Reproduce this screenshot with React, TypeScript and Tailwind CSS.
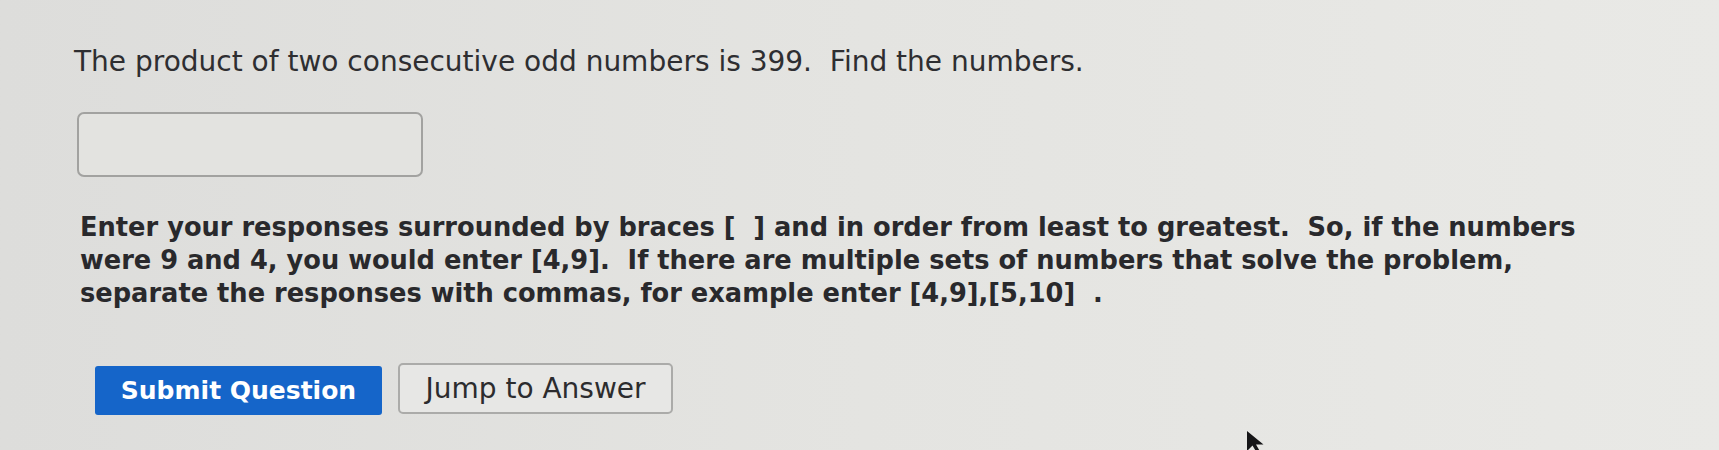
export default function App() {
  return (
    <div className="relative w-[1719px] h-[450px] overflow-hidden bg-gradient-to-r from-[#dddddb] via-[#e4e4e1] to-[#e9e9e6] text-[#2e2e31] font-['DejaVu_Sans',sans-serif]">
      <div className="pl-[74px] pt-[46px]">
        <p className="text-[28px] leading-[32px] whitespace-nowrap">
          The product of two consecutive odd numbers is 399.&nbsp; Find the numbers.
        </p>

        <div className="mt-[34px] ml-[3px] w-[346px] h-[65px] rounded-[7px] border-2 border-[#a2a2a0] bg-[#e3e3e0]" />

        <div className="mt-[34px] ml-[6px] text-[25.7px] leading-[33px] font-bold text-[#29292c] whitespace-nowrap">
          <p>Enter your responses surrounded by braces [&nbsp; ] and in order from least to greatest.&nbsp; So, if the numbers</p>
          <p>were 9 and 4, you would enter [4,9].&nbsp; If there are multiple sets of numbers that solve the problem,</p>
          <p>separate the responses with commas, for example enter [4,9],[5,10]&nbsp; .</p>
        </div>

        <div className="mt-[53px] ml-[21px] flex items-start gap-[16px]">
          <button className="mt-[3px] w-[287px] h-[49px] rounded-[3px] bg-[#1565c9] text-white text-[25px] font-bold">
            Submit Question
          </button>
          <button className="w-[275px] h-[51px] rounded-[5px] border-2 border-[#ababa9] bg-[#e7e7e5] text-[#2c2c2e] text-[28px]">
            Jump to Answer
          </button>
        </div>
      </div>

      <svg className="absolute left-[1245px] top-[429px]" width="22" height="26" viewBox="0 0 22 26">
        <path d="M2 2 L2 22 L7.5 16.5 L12 24 L15 22.5 L11 15.5 L18.5 15.5 Z" fill="#151517" />
      </svg>
    </div>
  );
}
